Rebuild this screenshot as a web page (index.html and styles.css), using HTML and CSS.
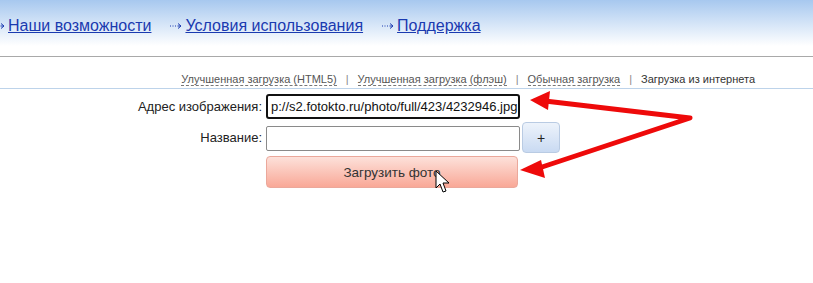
FILE: index.html
```html
<!DOCTYPE html>
<html lang="ru">
<head>
    <meta charset="UTF-8">
    <meta name="viewport" content="width=device-width, initial-scale=1.0">
    <title>Загрузка фото</title>
    <link rel="stylesheet" href="styles.css">
</head>
<body>
    <div class="top">
        <ul class="nav">
            <li><span class="arr"><svg width="12" height="8" viewBox="0 0 12 8"><path d="M0 4h1M2.5 4h1M5 4h1M7.5 4h3M8 1.5l3 2.5-3 2.5" fill="none" stroke="#1a3ab0" stroke-width="1"/></svg></span><a href="#">Наши возможности</a></li>
            <li><span class="arr"><svg width="12" height="8" viewBox="0 0 12 8"><path d="M0 4h1M2.5 4h1M5 4h1M7.5 4h3M8 1.5l3 2.5-3 2.5" fill="none" stroke="#1a3ab0" stroke-width="1"/></svg></span><a href="#">Условия использования</a></li>
            <li><span class="arr"><svg width="12" height="8" viewBox="0 0 12 8"><path d="M0 4h1M2.5 4h1M5 4h1M7.5 4h3M8 1.5l3 2.5-3 2.5" fill="none" stroke="#1a3ab0" stroke-width="1"/></svg></span><a href="#">Поддержка</a></li>
        </ul>
    </div>

    <ul class="tabs">
        <li><a href="#">Улучшенная загрузка (HTML5)</a></li>
        <li class="sep">|</li>
        <li><a href="#">Улучшенная загрузка (флэш)</a></li>
        <li class="sep">|</li>
        <li><a href="#">Обычная загрузка</a></li>
        <li class="sep">|</li>
        <li class="active">Загрузка из интернета</li>
    </ul>

    <div class="upload">
        <form class="form">
            <label class="lbl">Адрес изображения:</label>
            <div class="url">p://s2.fotokto.ru/photo/full/423/4232946.jpg</div>
            <span></span>

            <label class="lbl">Название:</label>
            <div class="name"></div>
            <button type="button" class="plus">+</button>

            <span></span>
            <button type="button" class="send">Загрузить фото</button>
            <span></span>
        </form>

        <!-- стрелки поверх скриншота -->
        <svg class="marks" width="813" height="200" viewBox="0 89 813 200">
            <path d="M545 101 L690 118 L536 169" fill="none" stroke="#ee0a0a" stroke-width="5" stroke-linejoin="round" stroke-linecap="round"/>
            <path d="M530 100 L550 91 L548 110 Z" fill="#ee0a0a"/>
            <path d="M520 170 L541 160 L545 178 Z" fill="#ee0a0a"/>
            <path d="M436 171 L436 188 L440 184 L443 192 L446 191 L443 183 L449 183 Z" fill="#fff" stroke="#000" stroke-width="1" stroke-linejoin="round"/>
        </svg>
    </div>
</body>
</html>
```
FILE: styles.css
```css
* {
    margin: 0;
    padding: 0;
    box-sizing: border-box;
}

body {
    font-family: "Liberation Sans", Arial, sans-serif;
    background: #fff;
}

ul {
    list-style: none;
}

.top {
    height: 57px;
    background: linear-gradient(#a7c8ef, #ffffff 46px);
    border-bottom: 1px solid #a9a9a9;
    overflow: hidden;
}

.nav {
    display: flex;
    padding-top: 17px;
    margin-left: -7px;
}

.nav li {
    display: flex;
    align-items: center;
    margin-right: 19px;
}

.nav .arr {
    display: flex;
    margin-right: 3px;
}

.nav a {
    font-size: 16px;
    color: #1a3ab0;
}

.tabs {
    display: flex;
    justify-content: flex-end;
    height: 32px;
    padding: 16px 58px 0 0;
    border-bottom: 1px solid #bdd3ea;
    font-size: 11px;
    color: #666;
}

.tabs li {
    white-space: nowrap;
}

.tabs a {
    color: #555;
    text-decoration: none;
    border-bottom: 1px dashed #777;
}

.tabs .sep {
    margin: 0 9px;
    color: #888;
}

.tabs .active {
    color: #333;
}

.upload {
    position: relative;
    height: 194px;
}

.form {
    display: grid;
    grid-template-columns: 262px 254px 40px;
    column-gap: 4px;
    row-gap: 3px;
    align-items: center;
    padding-top: 5px;
}

.lbl {
    text-align: right;
    font-size: 13px;
    color: #222;
}

.url {
    height: 25px;
    border: 2px solid #111;
    border-radius: 3px;
    padding: 3px 0 0 3px;
    font-size: 13px;
    color: #111;
    white-space: nowrap;
    overflow: hidden;
}

.name {
    height: 25px;
    margin-top: 2px;
    border: 1px solid #8a8a8a;
    border-radius: 2px;
}

.plus {
    width: 38px;
    height: 31px;
    margin-left: -2px;
    border: 1px solid #b9cbe3;
    border-radius: 4px;
    background: linear-gradient(#edf3fb, #c9daf2);
    font-family: inherit;
    font-size: 14px;
    color: #222;
}

.send {
    width: 252px;
    height: 32px;
    border: 1px solid #eba89b;
    border-radius: 4px;
    background: linear-gradient(#fde1da, #f9a897);
    font-family: inherit;
    font-size: 13.5px;
    color: #333;
}

.marks {
    position: absolute;
    left: 0;
    top: 0;
}
```
